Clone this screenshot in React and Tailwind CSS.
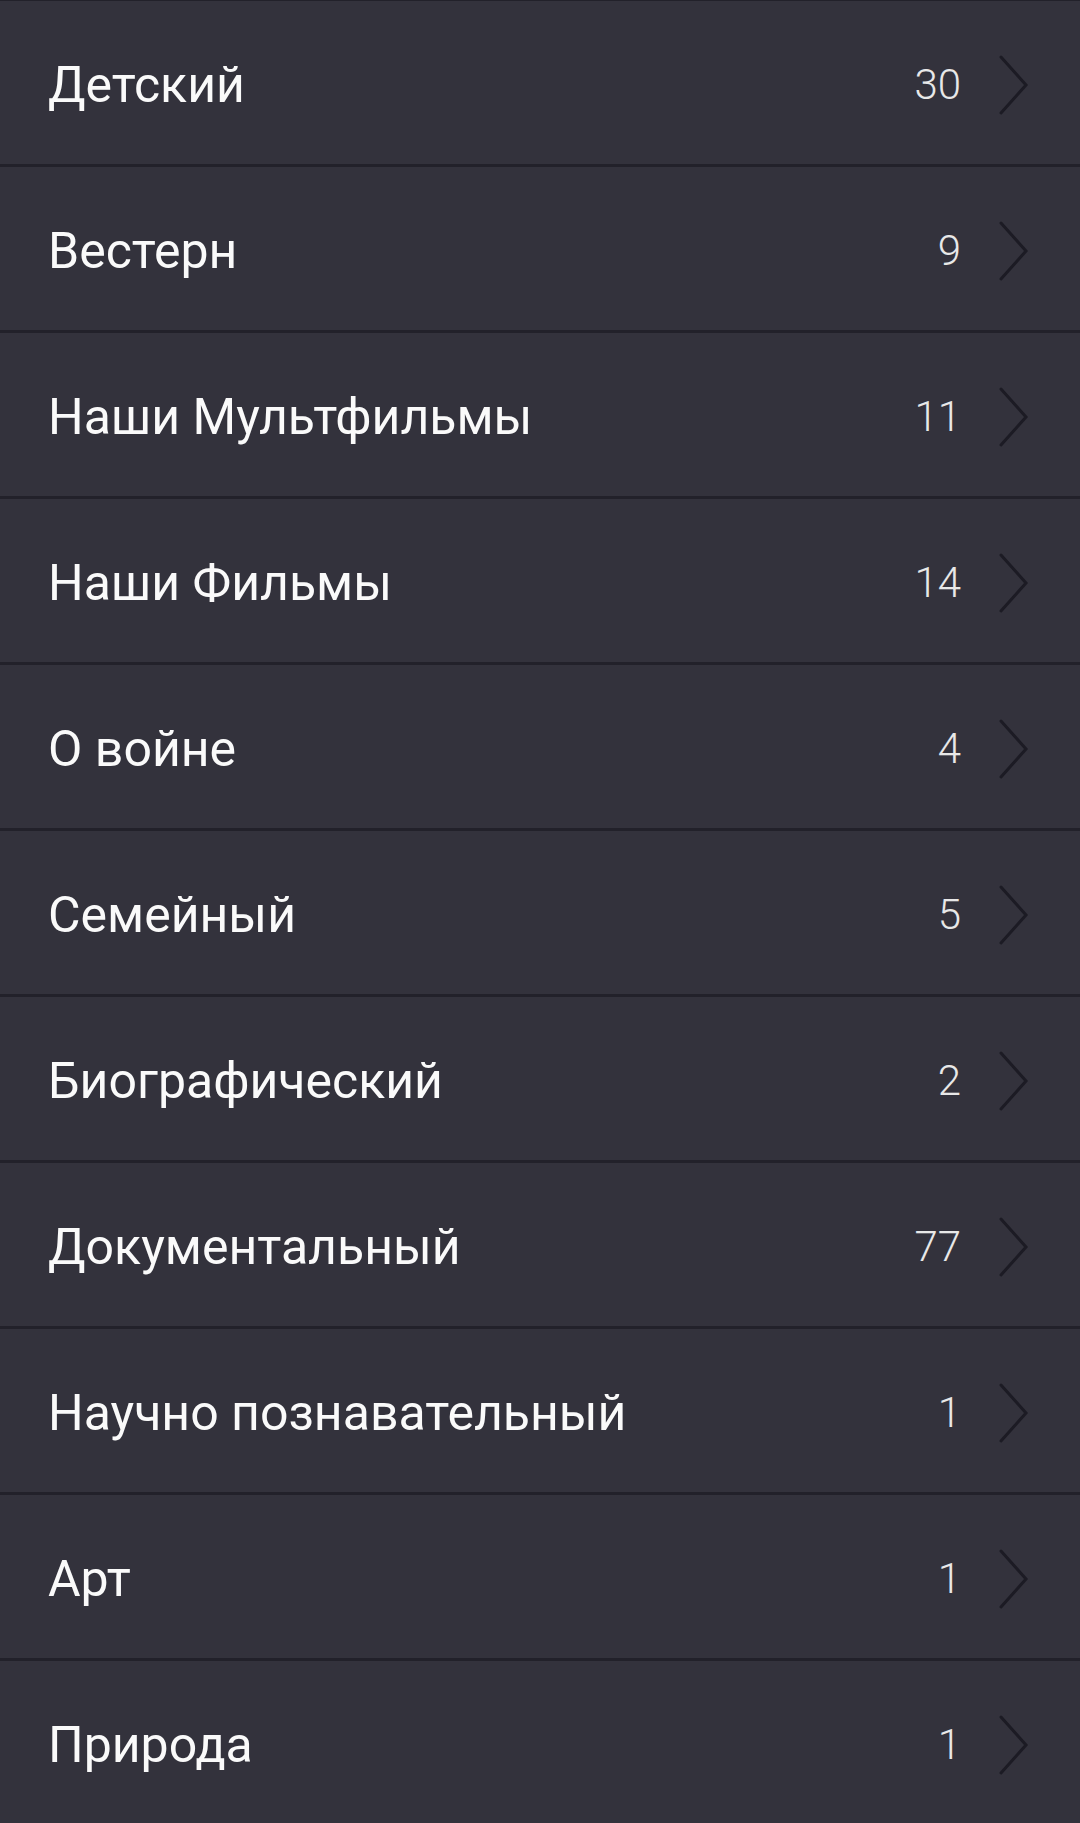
const genres = [
  { name: 'Детский', count: 30 },
  { name: 'Вестерн', count: 9 },
  { name: 'Наши Мультфильмы', count: 11 },
  { name: 'Наши Фильмы', count: 14 },
  { name: 'О войне', count: 4 },
  { name: 'Семейный', count: 5 },
  { name: 'Биографический', count: 2 },
  { name: 'Документальный', count: 77 },
  { name: 'Научно познавательный', count: 1 },
  { name: 'Арт', count: 1 },
  { name: 'Природа', count: 1 },
];

function Chevron() {
  return (
    <svg width="30" height="60" viewBox="0 0 30 60" fill="none" className="shrink-0">
      <path d="M2 2 L27 30 L2 58" stroke="#1c1b24" strokeWidth="3" strokeLinecap="round" strokeLinejoin="miter" />
    </svg>
  );
}

export default function App() {
  return (
    <div className="min-h-screen bg-[#33323c] border-t border-[#22212a] overflow-hidden" style={{ fontFamily: 'Roboto, "Noto Sans", sans-serif' }}>
      {genres.map((g) => (
        <div key={g.name} className="h-[166px] flex items-center pt-[5px] pl-[48px] pr-[51px] border-b-[3px] border-[#22212a]">
          <span className="flex-1 text-[50px] text-[#fafafa] leading-none">{g.name}</span>
          <span className="text-[42px] font-light text-[#e8e8e8] leading-none mr-[38px]">{g.count}</span>
          <Chevron />
        </div>
      ))}
    </div>
  );
}
